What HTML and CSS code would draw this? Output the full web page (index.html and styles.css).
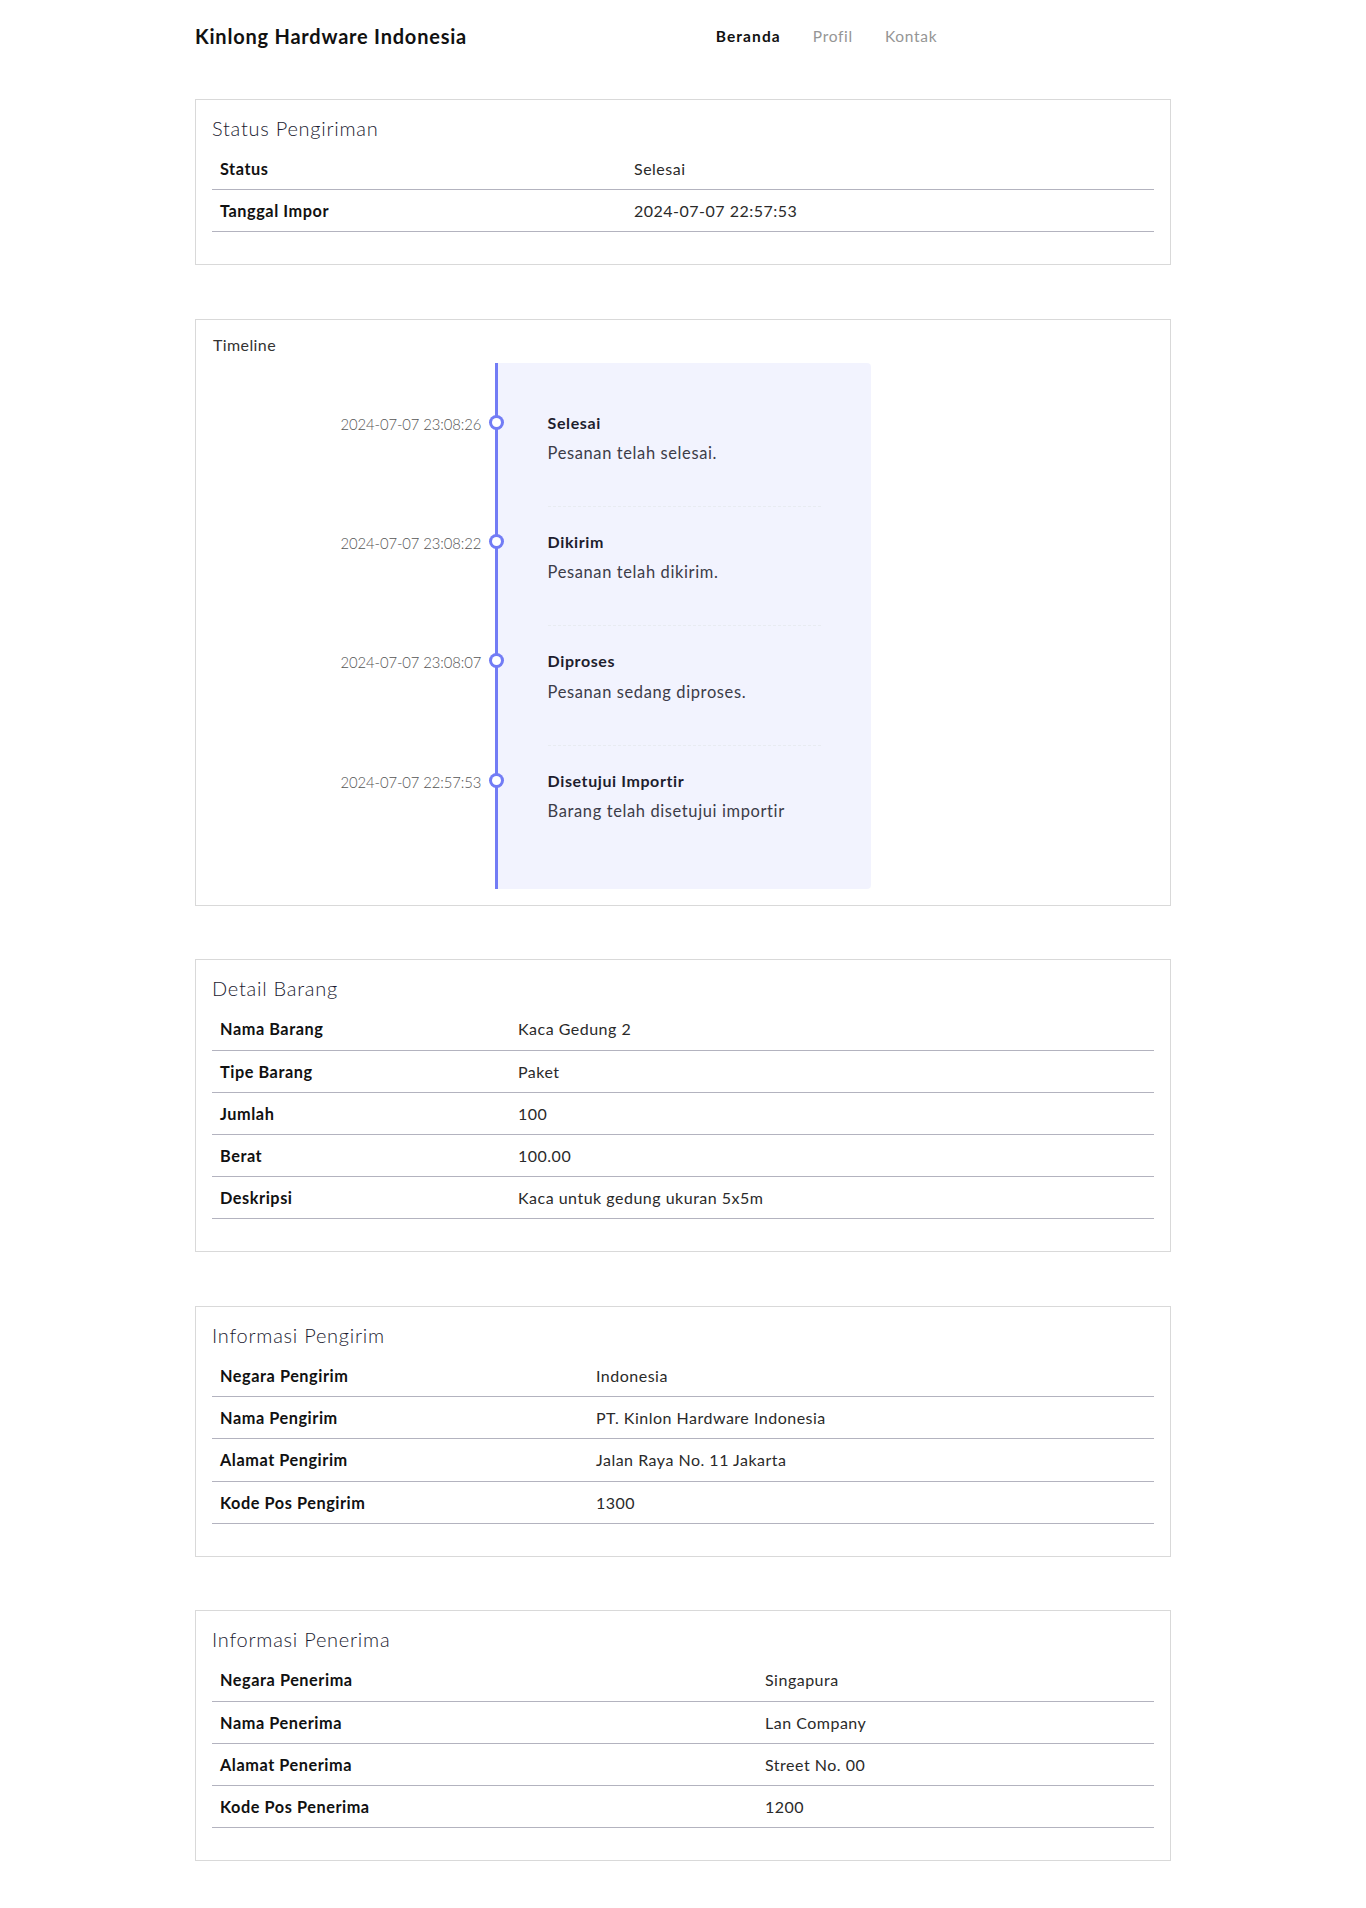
FILE: index.html
```
<!DOCTYPE html>
<html lang="id">
<head>
<meta charset="utf-8">
<title>Kinlong Hardware Indonesia</title>
<link rel="stylesheet" href="styles.css">
</head>
<body>
<header class="navbar">
  <div class="container nav-inner">
    <a class="brand" href="#">Kinlong Hardware Indonesia</a>
    <nav class="nav">
      <a class="nav-link active" href="#">Beranda</a>
      <a class="nav-link" href="#">Profil</a>
      <a class="nav-link" href="#">Kontak</a>
    </nav>
  </div>
</header>

<main class="container">
  <section class="card">
    <h5 class="card-title">Status Pengiriman</h5>
    <table class="table t-status">
      <tr><th>Status</th><td>Selesai</td></tr>
      <tr><th>Tanggal Impor</th><td>2024-07-07 22:57:53</td></tr>
    </table>
  </section>

  <section class="card">
    <div class="tl-label">Timeline</div>
    <ul class="timeline">
      <li class="event" data-date="2024-07-07 23:08:26">
        <h3>Selesai</h3>
        <p>Pesanan telah selesai.</p>
      </li>
      <li class="event" data-date="2024-07-07 23:08:22">
        <h3>Dikirim</h3>
        <p>Pesanan telah dikirim.</p>
      </li>
      <li class="event" data-date="2024-07-07 23:08:07">
        <h3>Diproses</h3>
        <p>Pesanan sedang diproses.</p>
      </li>
      <li class="event" data-date="2024-07-07 22:57:53">
        <h3>Disetujui Importir</h3>
        <p>Barang telah disetujui importir</p>
      </li>
    </ul>
  </section>

  <section class="card">
    <h5 class="card-title">Detail Barang</h5>
    <table class="table t-detail">
      <tr><th>Nama Barang</th><td>Kaca Gedung 2</td></tr>
      <tr><th>Tipe Barang</th><td>Paket</td></tr>
      <tr><th>Jumlah</th><td>100</td></tr>
      <tr><th>Berat</th><td>100.00</td></tr>
      <tr><th>Deskripsi</th><td>Kaca untuk gedung ukuran 5x5m</td></tr>
    </table>
  </section>

  <section class="card">
    <h5 class="card-title">Informasi Pengirim</h5>
    <table class="table t-pengirim">
      <tr><th>Negara Pengirim</th><td>Indonesia</td></tr>
      <tr><th>Nama Pengirim</th><td>PT. Kinlon Hardware Indonesia</td></tr>
      <tr><th>Alamat Pengirim</th><td>Jalan Raya No. 11 Jakarta</td></tr>
      <tr><th>Kode Pos Pengirim</th><td>1300</td></tr>
    </table>
  </section>

  <section class="card">
    <h5 class="card-title">Informasi Penerima</h5>
    <table class="table t-penerima">
      <tr><th>Negara Penerima</th><td>Singapura</td></tr>
      <tr><th>Nama Penerima</th><td>Lan Company</td></tr>
      <tr><th>Alamat Penerima</th><td>Street No. 00</td></tr>
      <tr><th>Kode Pos Penerima</th><td>1200</td></tr>
    </table>
  </section>
</main>
</body>
</html>
```

FILE: styles.css
```
*, *::before, *::after { box-sizing: border-box; }

body {
  margin: 0;
  font-family: "Lato", "Open Sans", "DejaVu Sans", sans-serif;
  font-size: 16px;
  line-height: 1.6;
  color: #212529;
  background: #fff;
}

.container {
  width: 976px;
  margin: 0 auto;
}

/* header */
.navbar { height: 72px; }
.nav-inner {
  display: flex;
  align-items: center;
  height: 100%;
}
.brand {
  width: 271px;
  margin-right: 16px;
  font-size: 20px;
  font-weight: 700;
  color: #111;
  text-decoration: none;
  white-space: nowrap;
  letter-spacing: 0.78px;
}
.nav {
  display: flex;
  margin: 0 auto;
}
.nav-link {
  padding: 0 16px;
  font-size: 15.5px;
  font-weight: 400;
  color: #959595;
  text-decoration: none;
  letter-spacing: 0.7px;
}
.nav-link.active {
  font-weight: 700;
  color: #111;
  letter-spacing: 1.1px;
}

main.container { padding-top: 27px; padding-bottom: 50px; }

/* cards */
.card {
  border: 1px solid #d9d9d9;
  padding: 16px;
  margin-bottom: 53.5px;
  background: #fff;
}
.card-title {
  margin: 0 0 8px;
  font-size: 20px;
  font-weight: 300;
  line-height: 1.2;
  color: #1a1a30;
  letter-spacing: 0.75px;
}

/* tables */
.table {
  width: 100%;
  border-collapse: collapse;
  margin-bottom: 16px;
}
.table th, .table td {
  padding: 8px;
  text-align: left;
  vertical-align: top;
  border-bottom: 1px solid #b3b3bf;
  line-height: 25.2px;
}
.table th {
  font-size: 16.3px;
  font-weight: 700;
  color: #111;
  letter-spacing: 0.55px;
}
.table td {
  font-weight: 400;
  color: #2a2a2a;
  letter-spacing: 0.5px;
}
.t-status th { width: 414px; }
.t-detail th { width: 298px; }
.t-pengirim th { width: 376px; }
.t-penerima th { width: 545px; }

/* timeline */
.tl-label {
  font-size: 16px;
  line-height: 18px;
  margin-bottom: 9px;
  padding-left: 1px;
  color: #333;
  letter-spacing: 0.4px;
}
.timeline {
  border-left: 3px solid #727cf5;
  border-bottom-right-radius: 4px;
  border-top-right-radius: 4px;
  background: rgba(114, 124, 245, 0.09);
  margin: 0 auto;
  letter-spacing: 0.2px;
  position: relative;
  line-height: 1.4em;
  font-size: 1.03em;
  padding: 50px;
  list-style: none;
  text-align: left;
  width: 40%;
}
.timeline h3 {
  font-weight: 700;
  font-size: 16px;
  line-height: 1.2;
  margin: 0 0 10px;
  color: #1e1e2e;
  letter-spacing: 0.6px;
}
.timeline p {
  margin: 0 0 16px;
  font-weight: 400;
  color: #3c3c48;
  letter-spacing: 0.62px;
}
.timeline .event {
  border-bottom: 1px dashed #e8ebf1;
  padding-bottom: 25px;
  margin-bottom: 25px;
  position: relative;
}
.timeline .event:last-of-type {
  padding-bottom: 0;
  margin-bottom: 0;
  border: none;
}
.timeline .event::before,
.timeline .event::after {
  position: absolute;
  display: block;
  top: 0;
}
.timeline .event::before {
  left: -207px;
  content: attr(data-date);
  text-align: left;
  font-weight: 300;
  font-size: 0.9em;
  min-width: 120px;
  color: #555;
  white-space: nowrap;
  letter-spacing: -0.1px;
}
.timeline .event::after {
  box-shadow: 0 0 0 3px #727cf5;
  left: -55.8px;
  background: #fff;
  border-radius: 50%;
  height: 9px;
  width: 9px;
  content: "";
  top: 5px;
}
```
